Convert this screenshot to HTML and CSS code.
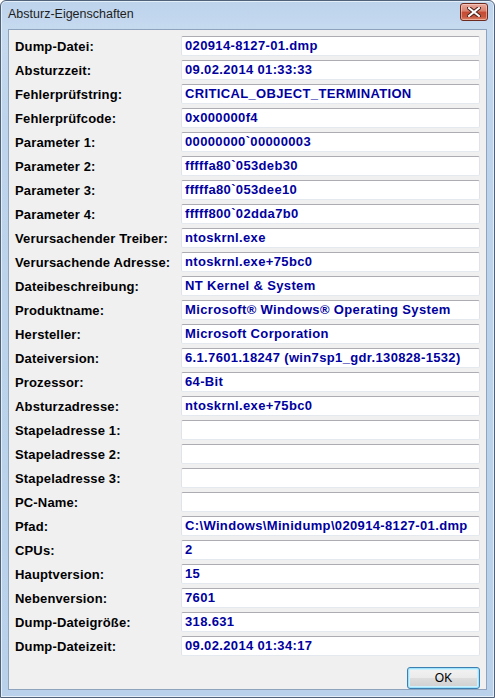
FILE: index.html
```html
<!DOCTYPE html>
<html lang="de">
<head>
    <meta charset="UTF-8">
    <meta name="viewport" content="width=device-width, initial-scale=1.0">
    <title>Absturz-Eigenschaften</title>
    <link rel="stylesheet" href="styles.css">
</head>
<body>
    <div class="window">
        <div class="titlebar">
            <span class="title">Absturz-Eigenschaften</span>
            <button type="button" class="close" title="Schließen">
                <svg width="14" height="10" viewBox="0 0 14 10">
                    <path d="M2 1 L12 9 M12 1 L2 9" stroke="#4a2018" stroke-width="4" stroke-linecap="square"/>
                    <path d="M2 1 L12 9 M12 1 L2 9" stroke="#ffffff" stroke-width="2" stroke-linecap="square"/>
                </svg>
            </button>
        </div>
        <div class="client">
            <div class="props">
                <label>Dump-Datei:</label><div class="field">020914-8127-01.dmp</div>
                <label>Absturzzeit:</label><div class="field">09.02.2014 01:33:33</div>
                <label>Fehlerprüfstring:</label><div class="field">CRITICAL_OBJECT_TERMINATION</div>
                <label>Fehlerprüfcode:</label><div class="field">0x000000f4</div>
                <label>Parameter 1:</label><div class="field">00000000`00000003</div>
                <label>Parameter 2:</label><div class="field">fffffa80`053deb30</div>
                <label>Parameter 3:</label><div class="field">fffffa80`053dee10</div>
                <label>Parameter 4:</label><div class="field">fffff800`02dda7b0</div>
                <label>Verursachender Treiber:</label><div class="field">ntoskrnl.exe</div>
                <label>Verursachende Adresse:</label><div class="field">ntoskrnl.exe+75bc0</div>
                <label>Dateibeschreibung:</label><div class="field">NT Kernel &amp; System</div>
                <label>Produktname:</label><div class="field">Microsoft® Windows® Operating System</div>
                <label>Hersteller:</label><div class="field">Microsoft Corporation</div>
                <label>Dateiversion:</label><div class="field">6.1.7601.18247 (win7sp1_gdr.130828-1532)</div>
                <label>Prozessor:</label><div class="field">64-Bit</div>
                <label>Absturzadresse:</label><div class="field">ntoskrnl.exe+75bc0</div>
                <label>Stapeladresse 1:</label><div class="field"></div>
                <label>Stapeladresse 2:</label><div class="field"></div>
                <label>Stapeladresse 3:</label><div class="field"></div>
                <label>PC-Name:</label><div class="field"></div>
                <label>Pfad:</label><div class="field">C:\Windows\Minidump\020914-8127-01.dmp</div>
                <label>CPUs:</label><div class="field">2</div>
                <label>Hauptversion:</label><div class="field">15</div>
                <label>Nebenversion:</label><div class="field">7601</div>
                <label>Dump-Dateigröße:</label><div class="field">318.631</div>
                <label>Dump-Dateizeit:</label><div class="field">09.02.2014 01:34:17</div>
            </div>
            <div class="actions">
                <button type="button" class="ok">OK</button>
            </div>
        </div>
    </div>
</body>
</html>
```

FILE: styles.css
```css
html, body {
    margin: 0;
    padding: 0;
    background: #ffffff;
}
.window {
    width: 495px;
    height: 698px;
    box-sizing: border-box;
    border: 1px solid #50617a;
    border-radius: 6px 6px 0 0;
    background: linear-gradient(to bottom, #bcd3ec 0px, #c6daef 28px, #bdd4ec 120px, #b9d1ea 100%);
    display: flex;
    flex-direction: column;
    box-shadow: inset 0 0 0 1px #e4eef9;
}
.titlebar {
    height: 29px;
    display: flex;
    justify-content: space-between;
    align-items: flex-start;
    padding: 0 6px 0 7px;
}
.title {
    font-family: "Liberation Sans", Arial, sans-serif;
    font-size: 12.5px;
    color: #1e1e1e;
    margin-top: 6px;
}
.close {
    margin-top: 2px;
    width: 28px;
    height: 18px;
    padding: 0;
    border: 1px solid #6d2a1f;
    border-radius: 3px;
    background: linear-gradient(to bottom, #e8a99c 0%, #d8816f 45%, #c64a33 50%, #c8563e 80%, #de8a6e 100%);
    box-shadow: inset 0 0 0 1px rgba(255, 220, 210, 0.5);
    display: flex;
    align-items: center;
    justify-content: center;
}
.client {
    flex: 1;
    margin: 0 7px 7px 7px;
    background: #f0f0f0;
    border: 1px solid #8ea3bd;
    display: flex;
    flex-direction: column;
    padding: 6px 6px 0 6px;
}
.props {
    display: grid;
    grid-template-columns: 166px 1fr;
    grid-auto-rows: 20px;
    row-gap: 4px;
    align-items: center;
}
.props label {
    font-family: "Liberation Sans", Arial, sans-serif;
    font-weight: bold;
    font-size: 13px;
    letter-spacing: 0.15px;
    color: #000000;
    white-space: nowrap;
}
.field {
    height: 20px;
    box-sizing: border-box;
    background: #ffffff;
    border: 1px solid #e2e3ea;
    border-top-color: #abadb3;
    border-bottom-color: #e3e9ef;
    border-radius: 2px;
    padding: 0 3px;
    font-family: "Liberation Sans", Arial, sans-serif;
    font-weight: bold;
    font-size: 13px;
    letter-spacing: 0.35px;
    line-height: 18px;
    color: #0000a0;
    white-space: nowrap;
    overflow: hidden;
}
.actions {
    display: flex;
    justify-content: flex-end;
    margin-top: 11px;
}
.ok {
    width: 73px;
    height: 22px;
    padding: 0;
    border: 1px solid #3c7fb1;
    border-radius: 3px;
    background: linear-gradient(to bottom, #f2f2f2 0%, #ebebeb 48%, #dddddd 52%, #cfcfcf 100%);
    box-shadow: inset 0 0 0 1px #9fe2fb, inset 0 0 0 2px #cdf0fd;
    font-family: "Liberation Sans", Arial, sans-serif;
    font-size: 12px;
    color: #000000;
}
```
